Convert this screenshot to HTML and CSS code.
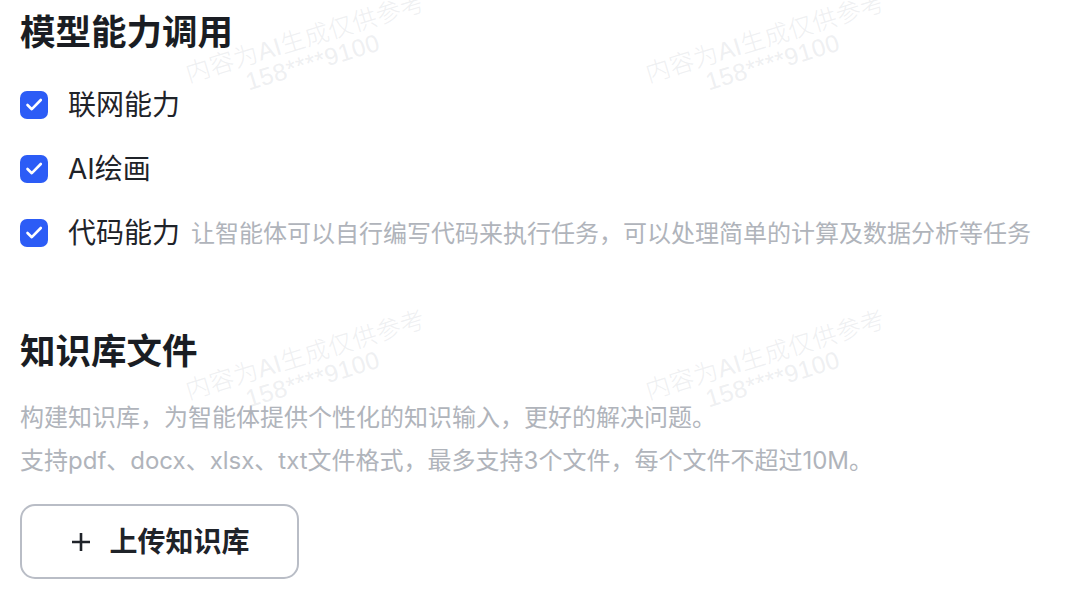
FILE: index.html
```html
<!DOCTYPE html>
<html lang="zh-CN">
<head>
<meta charset="utf-8">
<title>模型能力调用</title>
<link rel="stylesheet" href="styles.css">
</head>
<body>
<div class="page">
  <section class="section">
    <h2 class="title">模型能力调用</h2>
    <ul class="options">
      <li class="option">
        <span class="check"><svg viewBox="0 0 28 28" width="28" height="28"><path d="M7.5 14 L11.8 18.2 L20.8 9" fill="none" stroke="#fff" stroke-width="2.6" stroke-linecap="round" stroke-linejoin="round"/></svg></span>
        <span class="label">联网能力</span>
      </li>
      <li class="option">
        <span class="check"><svg viewBox="0 0 28 28" width="28" height="28"><path d="M7.5 14 L11.8 18.2 L20.8 9" fill="none" stroke="#fff" stroke-width="2.6" stroke-linecap="round" stroke-linejoin="round"/></svg></span>
        <span class="label">AI绘画</span>
      </li>
      <li class="option">
        <span class="check"><svg viewBox="0 0 28 28" width="28" height="28"><path d="M7.5 14 L11.8 18.2 L20.8 9" fill="none" stroke="#fff" stroke-width="2.6" stroke-linecap="round" stroke-linejoin="round"/></svg></span>
        <span class="label">代码能力</span>
        <span class="hint">让智能体可以自行编写代码来执行任务，可以处理简单的计算及数据分析等任务</span>
      </li>
    </ul>
  </section>

  <section class="section kb">
    <h2 class="title">知识库文件</h2>
    <p class="desc">构建知识库，为智能体提供个性化的知识输入，更好的解决问题。<br>支持pdf、docx、xlsx、txt文件格式，最多支持3个文件，每个文件不超过10M。</p>
    <button class="upload" type="button">
      <svg class="plus" viewBox="0 0 20 20" width="20" height="20"><path d="M10 1 V19 M1 10 H19" stroke="#1f2329" stroke-width="2.6" fill="none"/></svg>
      <span>上传知识库</span>
    </button>
  </section>
</div>

<div class="watermarks" aria-hidden="true">
  <div class="wm wm1"><span>内容为AI生成仅供参考</span><span>158****9100</span></div>
  <div class="wm wm2"><span>内容为AI生成仅供参考</span><span>158****9100</span></div>
  <div class="wm wm3"><span>内容为AI生成仅供参考</span><span>158****9100</span></div>
  <div class="wm wm4"><span>内容为AI生成仅供参考</span><span>158****9100</span></div>
</div>
</body>
</html>
```

FILE: styles.css
```css
* { box-sizing: border-box; }

html, body {
  margin: 0;
  padding: 0;
  background: #ffffff;
}

body {
  font-family: Inter, "Noto Sans CJK SC", sans-serif;
  color: #1f2329;
  width: 1070px;
  height: 600px;
  overflow: hidden;
  position: relative;
}

.page {
  padding: 9px 0 0 20px;
}

.title {
  margin: 0;
  font-size: 35.5px;
  line-height: 48px;
  font-weight: 700;
  color: #1a1d23;
}

.options {
  list-style: none;
  margin: 16px 0 0;
  padding: 0;
}

.option {
  display: flex;
  align-items: center;
  height: 64px;
}

.check {
  width: 28px;
  height: 28px;
  border-radius: 7px;
  background: #2c5cf6;
  display: flex;
  align-items: center;
  justify-content: center;
  flex: none;
}

.check svg { display: block; }

.label {
  margin-left: 20px;
  font-size: 28px;
  line-height: 40px;
  color: #1f2329;
}

.hint {
  margin-left: 11px;
  font-size: 24px;
  line-height: 34px;
  color: #b0b4bb;
  white-space: nowrap;
  padding-top: 2px;
}

.kb {
  margin-top: 63px;
}

.desc {
  margin: 20px 0 0;
  font-size: 24px;
  line-height: 43px;
  color: #b0b4bb;
}

.upload {
  margin-top: 22px;
  width: 279px;
  height: 75px;
  border: 2px solid #b9bdc6;
  border-radius: 15px;
  background: #ffffff;
  display: flex;
  align-items: center;
  justify-content: center;
  gap: 18px;
  padding: 0 0 0 2px;
  font-family: Inter, "Noto Sans CJK SC", sans-serif;
  font-size: 28px;
  font-weight: 600;
  color: #1f2329;
  cursor: pointer;
}

.upload span { line-height: 40px; }

.plus { display: block; flex: none; }

.watermarks {
  position: absolute;
  inset: 0;
  pointer-events: none;
}

.wm {
  position: absolute;
  display: flex;
  flex-direction: column;
  align-items: center;
  transform: translate(-50%, -50%) rotate(-17deg);
  font-family: "Liberation Sans", "Noto Sans CJK SC", sans-serif;
  font-size: 24.5px;
  font-weight: 300;
  letter-spacing: 0.5px;
  line-height: 25px;
  color: rgba(200, 203, 210, 0.3);
  white-space: nowrap;
}

.wm1 { left: 309px; top: 50px; }
.wm2 { left: 769px; top: 50px; }
.wm3 { left: 309px; top: 367px; }
.wm4 { left: 769px; top: 367px; }
```
